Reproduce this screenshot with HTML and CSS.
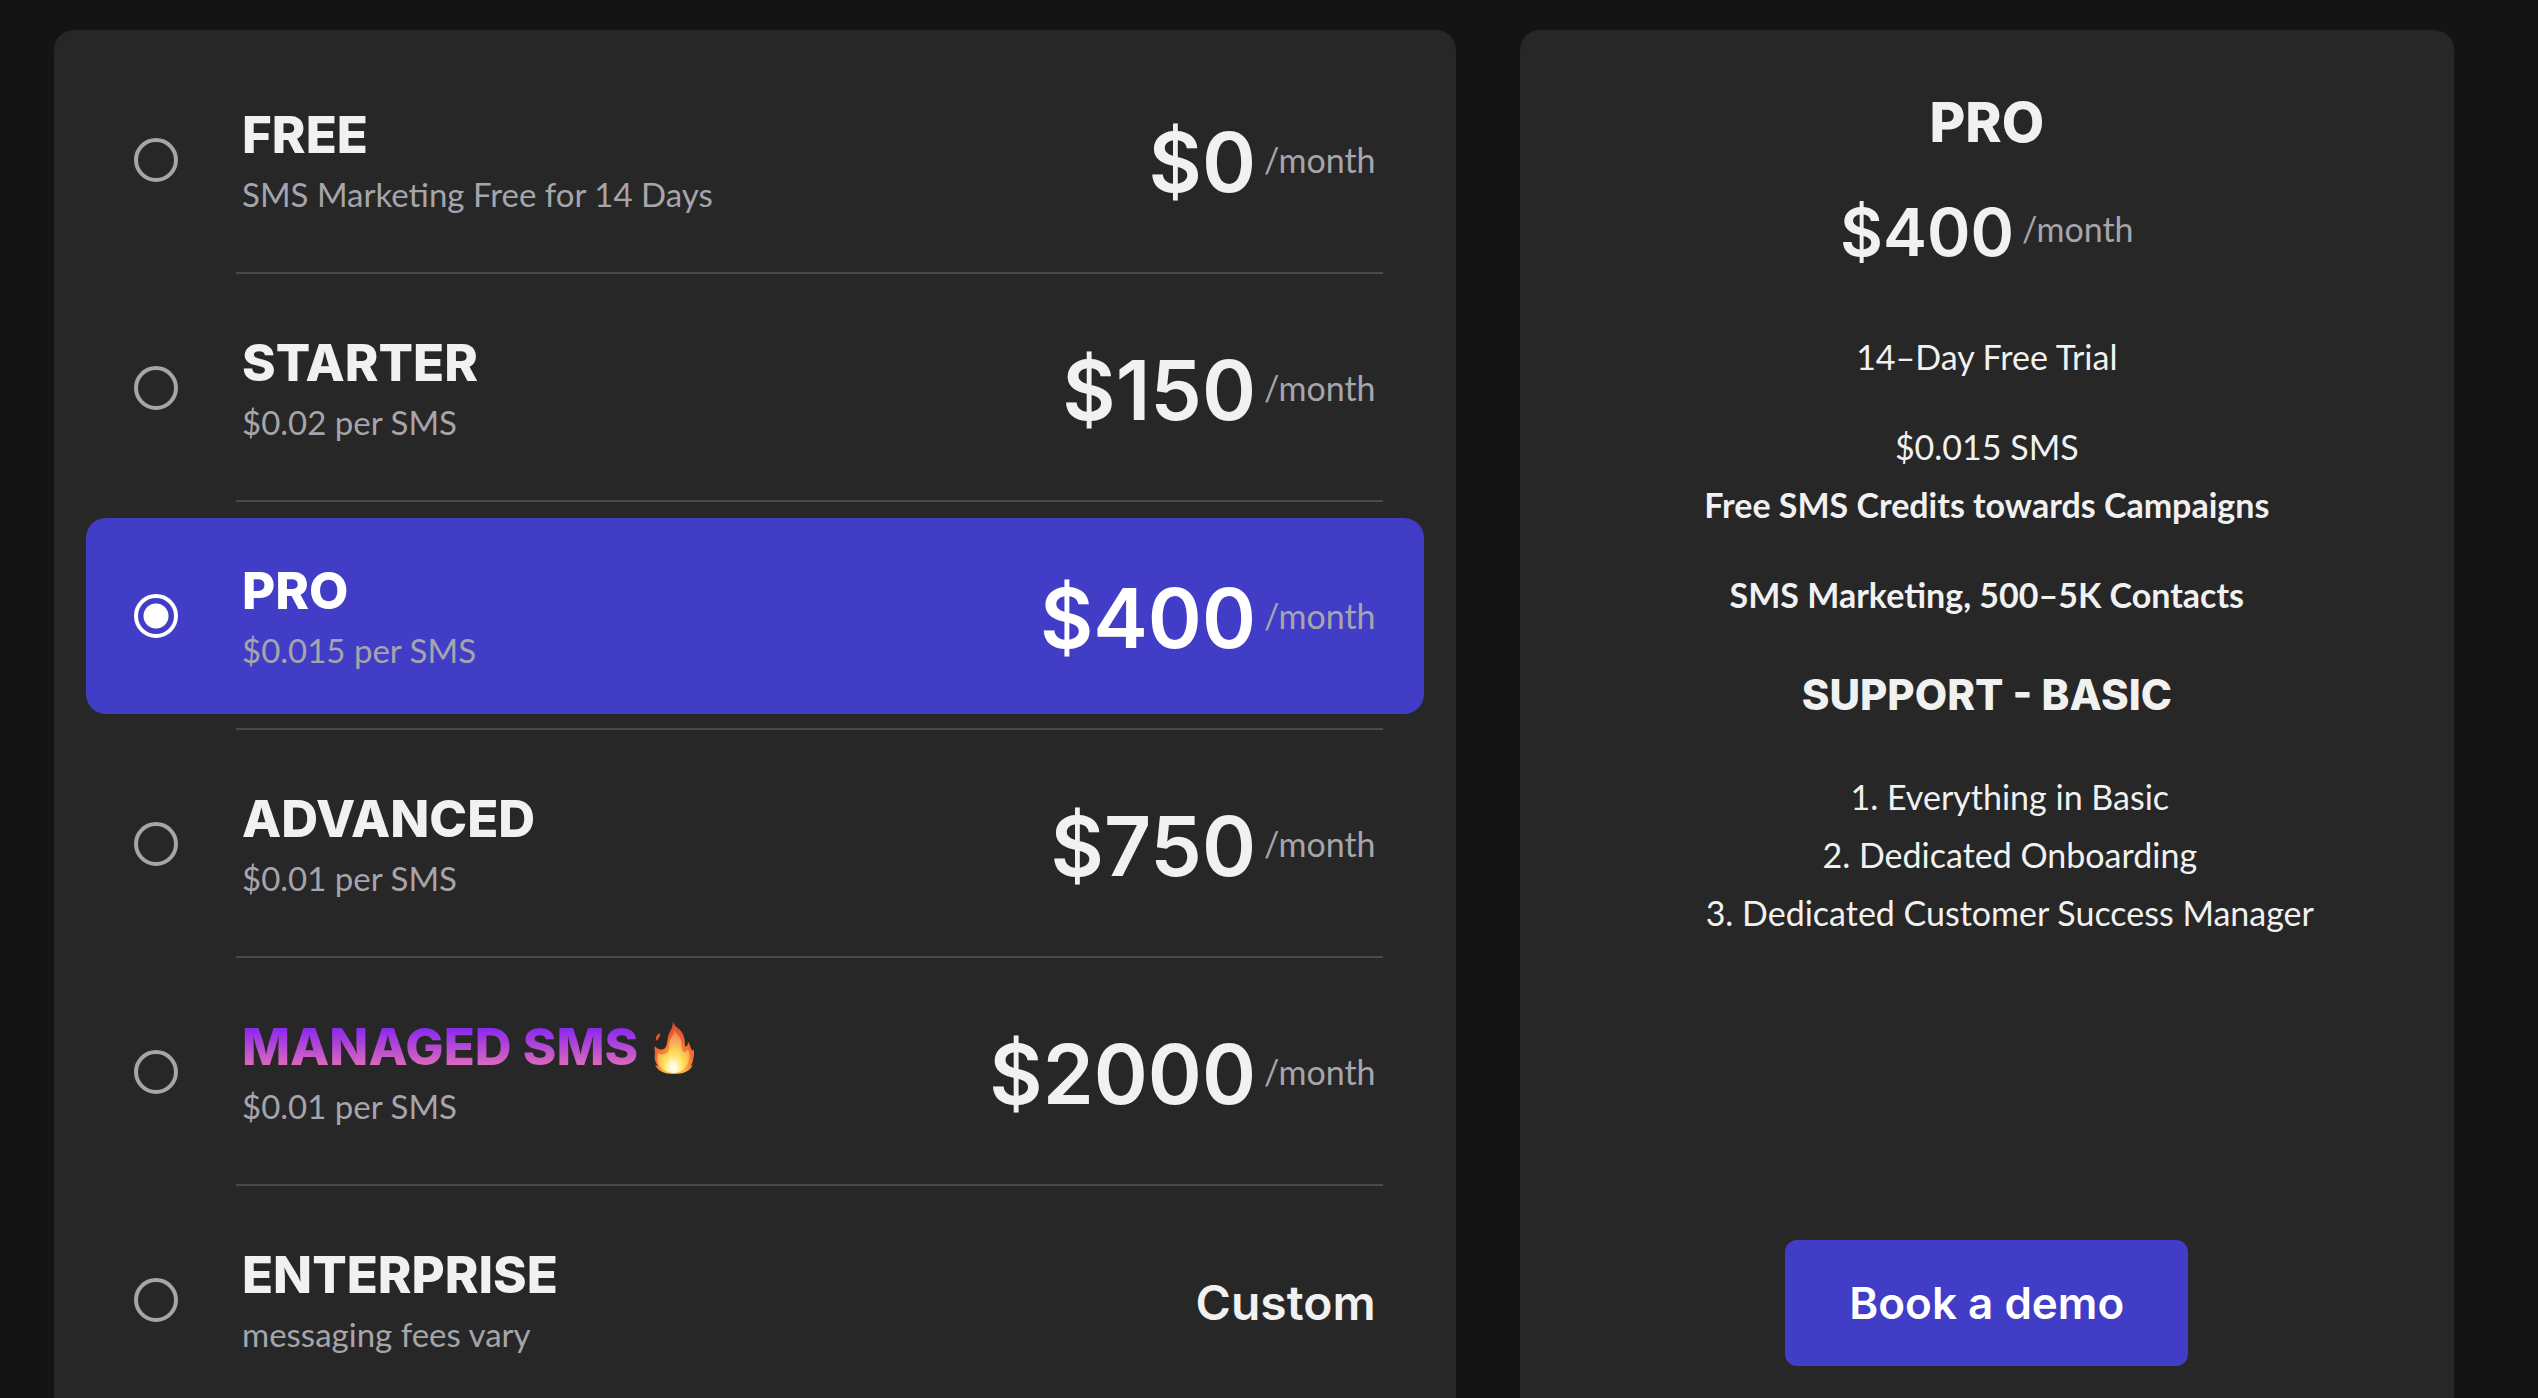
FILE: index.html
```
<!DOCTYPE html>
<html lang="en">

<head>
    <meta charset="UTF-8">
    <meta name="viewport" content="width=device-width, initial-scale=1.0">
    <title>Pricing</title>
    <link rel="stylesheet" href="styles.css">
</head>

<body>
    <main class="pricing">
        <!-- Plan list -->
        <form class="card plans">
            <label class="plan">
                <input type="radio" name="plan" value="free">
                <span class="plan-info">
                    <span class="plan-name">FREE</span>
                    <span class="plan-note">SMS Marketing Free for 14 Days</span>
                </span>
                <span class="price">$0 <span class="period">/month</span></span>
            </label>
            <label class="plan">
                <input type="radio" name="plan" value="starter">
                <span class="plan-info">
                    <span class="plan-name">STARTER</span>
                    <span class="plan-note">$0.02 per SMS</span>
                </span>
                <span class="price">$150 <span class="period">/month</span></span>
            </label>
            <label class="plan">
                <input type="radio" name="plan" value="pro" checked>
                <span class="plan-info">
                    <span class="plan-name">PRO</span>
                    <span class="plan-note">$0.015 per SMS</span>
                </span>
                <span class="price">$400 <span class="period">/month</span></span>
            </label>
            <label class="plan">
                <input type="radio" name="plan" value="advanced">
                <span class="plan-info">
                    <span class="plan-name">ADVANCED</span>
                    <span class="plan-note">$0.01 per SMS</span>
                </span>
                <span class="price">$750 <span class="period">/month</span></span>
            </label>
            <label class="plan">
                <input type="radio" name="plan" value="managed">
                <span class="plan-info">
                    <span class="plan-name"><span class="hot">MANAGED SMS</span>
                        <svg class="fire" viewBox="0 0 40 54" aria-hidden="true">
                            <defs>
                                <radialGradient id="outer" cx="0.5" cy="0.9" r="0.8">
                                    <stop offset="0.3" stop-color="#fdb440" />
                                    <stop offset="0.6" stop-color="#f4702f" />
                                    <stop offset="1" stop-color="#dd4a2c" />
                                </radialGradient>
                                <radialGradient id="inner" cx="0.5" cy="0.88" r="0.8">
                                    <stop offset="0.1" stop-color="#fffce0" />
                                    <stop offset="0.4" stop-color="#ffdf55" />
                                    <stop offset="0.75" stop-color="#f9a45a" />
                                    <stop offset="1" stop-color="#f08050" />
                                </radialGradient>
                            </defs>
                            <path fill="url(#outer)" d="M19 0c0 5 4 7 8 11 3 4 4 8 4 15 1 1 3 0 3-4 3 3 2 6 4 8 1 1 2 0 2-1 1 6-1 9-1 12l-2 5 2-1c-3 6-9 9-19 9S4 51 1 45l3 1C1 42 0 38 1 34c0-3-1-5 0-8 2 3 5 4 9 3 3-2 3-7 4-12 1-6 5-7 5-17zM6 13c1 4-2 5-3 8-2-2-1-4 0-6l3-2z" />
                            <path fill="url(#inner)" d="M20 8c1 5 5 7 7 12 1 4 0 8 2 12 2 1 4-1 5-3 2 5 2 10 0 14-3 6-7 10-14 10S8 50 5 45c-2-4-2-8-1-12 3 2 6 2 9 0 4-3 1-9 3-13s5-5 4-12z" />
                        </svg>
                    </span>
                    <span class="plan-note">$0.01 per SMS</span>
                </span>
                <span class="price">$2000 <span class="period">/month</span></span>
            </label>
            <label class="plan">
                <input type="radio" name="plan" value="enterprise">
                <span class="plan-info">
                    <span class="plan-name">ENTERPRISE</span>
                    <span class="plan-note">messaging fees vary</span>
                </span>
                <span class="price custom">Custom</span>
            </label>
        </form>

        <!-- Selected plan -->
        <section class="card details">
            <h2>PRO</h2>
            <div class="price total">$400 <span class="period">/month</span></div>
            <p>14–Day Free Trial</p>
            <p>$0.015 SMS<br><strong>Free SMS Credits towards Campaigns</strong></p>
            <p><strong>SMS Marketing, 500–5K Contacts</strong></p>
            <h3>SUPPORT - BASIC</h3>
            <ol>
                <li>Everything in Basic</li>
                <li>Dedicated Onboarding</li>
                <li>Dedicated Customer Success Manager</li>
            </ol>
            <button type="button" class="demo">Book a demo</button>
        </section>
    </main>
</body>

</html>
```
FILE: styles.css
```
* {
    box-sizing: border-box;
}

body {
    margin: 0;
    height: 100vh;
    overflow: hidden;
    background-color: #141414;
    color: #f1f1f1;
    font-family: Lato, "Open Sans", sans-serif;
    font-size: 34px;
    line-height: 58px;
}

.pricing {
    display: grid;
    grid-template-columns: 3fr 2fr;
    gap: 64px;
    padding: 30px 84px 0 54px;
}

.card {
    background-color: #272727;
    border-radius: 20px;
}

.plans {
    padding: 32px;
}

.plan {
    position: relative;
    display: flex;
    align-items: center;
    height: 196px;
    padding: 0 48px;
    border-radius: 20px;
    cursor: pointer;
}

.plan + .plan {
    margin-top: 32px;
}

/* divider between two plans */
.plan + .plan::before {
    content: "";
    position: absolute;
    top: -18px;
    left: 150px;
    right: 41px;
    height: 2px;
    background-color: #4a4a4a;
}

.plan:has(input:checked) {
    background-color: #423dc6;
    color: #ffffff;
}

.plan input {
    appearance: none;
    flex: none;
    width: 44px;
    height: 44px;
    margin: 0 64px 0 0;
    border: 4px solid #a5a5ab;
    border-radius: 50%;
}

.plan input:checked {
    border-color: #ffffff;
    background: radial-gradient(circle, #ffffff 12px, transparent 13px);
}

.plan-info {
    flex: 1;
    display: flex;
    flex-direction: column;
    padding-top: 8px;
}

.plan-name {
    display: flex;
    align-items: center;
    gap: 16px;
    font-family: Inter, sans-serif;
    font-size: 51px;
    font-weight: 800;
    line-height: 60px;
}

.plan-note,
.period {
    color: #a5a5ab;
}

.plan-note {
    font-size: 33px;
}

.hot {
    background: linear-gradient(#7f1ff5 10%, #e874b4 90%);
    background-clip: text;
    color: transparent;
}

.fire {
    width: 40px;
    height: 54px;
}

.price {
    display: flex;
    align-items: center;
    gap: 8px;
    padding-top: 6px;
    font-family: Inter, sans-serif;
    font-size: 82px;
    font-weight: 600;
    line-height: 96px;
}

.period {
    margin-bottom: 6px;
    font-family: Lato, "Open Sans", sans-serif;
    font-size: 34px;
    font-weight: 400;
    line-height: 58px;
}

.custom {
    font-size: 48px;
}

.details {
    display: flex;
    flex-direction: column;
    align-items: center;
    padding: 60px 32px 64px;
    text-align: center;
}

.details h2 {
    margin: 0;
    font-family: Inter, sans-serif;
    font-size: 55px;
    font-weight: 800;
    line-height: 64px;
}

.total {
    margin: 24px 0 48px;
    font-size: 66px;
}

.details p {
    margin: 0 0 32px;
}

.details h3 {
    margin: 10px 0 44px;
    font-family: Inter, sans-serif;
    font-size: 42px;
    font-weight: 800;
    line-height: 58px;
}

.details ol {
    margin: 0;
    padding-left: 46px;
    list-style-position: inside;
}

.demo {
    margin-top: auto;
    padding: 34px 64px;
    border: 0;
    border-radius: 12px;
    background-color: #423dc6;
    color: #ffffff;
    font-family: Inter, sans-serif;
    font-size: 44px;
    font-weight: 600;
    line-height: 58px;
    cursor: pointer;
}
```
